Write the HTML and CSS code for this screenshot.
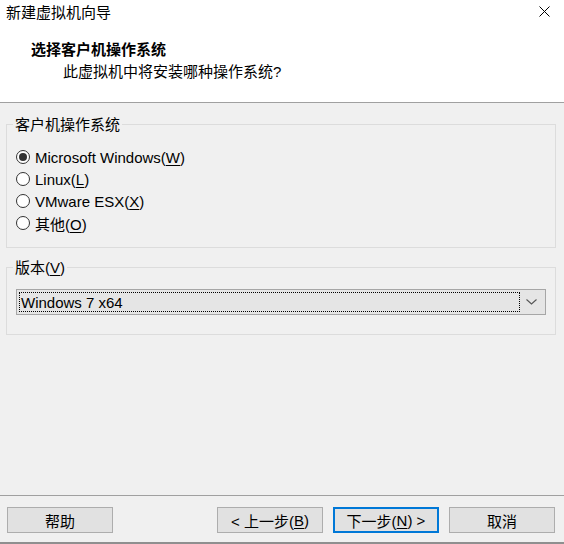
FILE: index.html
```html
<!DOCTYPE html>
<html lang="zh-CN">
<head>
<meta charset="utf-8">
<title>新建虚拟机向导</title>
<link rel="stylesheet" href="styles.css">
</head>
<body>
<div class="window">
  <header class="header">
    <div class="titlebar">
      <span class="title">新建虚拟机向导</span>
      <span class="close">
        <svg width="11" height="11" viewBox="0 0 11 11"><path d="M0.5 0.5 L10.5 10.5 M10.5 0.5 L0.5 10.5" stroke="#000" stroke-width="1" fill="none"/></svg>
      </span>
    </div>
    <div class="heading">选择客户机操作系统</div>
    <div class="subheading">此虚拟机中将安装哪种操作系统?</div>
  </header>
  <main class="main">
    <fieldset class="group group-os">
      <legend class="legend">客户机操作系统</legend>
      <div class="radios">
        <label class="radio"><span class="dot checked"></span><span>Microsoft Windows(<u>W</u>)</span></label>
        <label class="radio"><span class="dot"></span><span>Linux(<u>L</u>)</span></label>
        <label class="radio"><span class="dot"></span><span>VMware ESX(<u>X</u>)</span></label>
        <label class="radio"><span class="dot"></span><span>其他(<u>O</u>)</span></label>
      </div>
    </fieldset>
    <fieldset class="group group-ver">
      <legend class="legend">版本(<u>V</u>)</legend>
      <div class="combo">
        <div class="combo-value"><span>Windows 7 x64</span></div>
        <div class="combo-arrow">
          <svg width="11" height="6" viewBox="0 0 11 6"><path d="M0.5 0.5 L5.5 5 L10.5 0.5" stroke="#555" stroke-width="1.1" fill="none"/></svg>
        </div>
      </div>
    </fieldset>
  </main>
  <footer class="footer">
    <button class="btn">帮助</button>
    <div class="spacer"></div>
    <button class="btn">&lt; 上一步(<u>B</u>)</button>
    <button class="btn btn-default">下一步(<u>N</u>) &gt;</button>
    <button class="btn">取消</button>
  </footer>
</div>
</body>
</html>
```

FILE: styles.css
```css
* { box-sizing: border-box; }
html, body { margin: 0; padding: 0; }
body {
  width: 564px;
  height: 544px;
  background: #f0f0f0;
  font-family: "Liberation Sans", "Noto Sans CJK SC", sans-serif;
  font-size: 15px;
  color: #000;
  overflow: hidden;
}
.window {
  height: 544px;
  display: flex;
  flex-direction: column;
  border-bottom: 2px solid #8f8f8f;
}
.header {
  background: #fff;
  height: 103px;
  border-bottom: 1px solid #a0a0a0;
}
.titlebar {
  height: 25px;
  display: flex;
  align-items: center;
  justify-content: space-between;
  padding: 0 14px 0 6px;
}
.title { line-height: 25px; }
.close { display: flex; height: 11px; margin-top: -2px; }
.heading {
  margin-top: 14px;
  padding-left: 31px;
  font-weight: bold;
  line-height: 22px;
}
.subheading {
  padding-left: 63px;
  line-height: 22px;
}
.main {
  flex: 1;
  padding: 11px 8px 0 6px;
}
.group {
  margin: 0;
  border: 1px solid #dcdcdc;
  padding: 0 9px 0 6px;
  min-width: 0;
}
.legend {
  padding: 0 2px;
  line-height: 21px;
}
.group-os { padding-top: 11px; padding-bottom: 13px; }
.group-ver { margin-top: 9px; padding-top: 11px; padding-bottom: 19px; }
.radios { display: flex; flex-direction: column; margin-left: 3px; }
.radio {
  display: flex;
  align-items: center;
  height: 22px;
  gap: 5px;
}
.dot {
  width: 14px;
  height: 14px;
  border: 1px solid #333;
  border-radius: 50%;
  background: #fff;
  display: flex;
  align-items: center;
  justify-content: center;
  flex: none;
}
.dot.checked::after {
  content: "";
  width: 8px;
  height: 8px;
  border-radius: 50%;
  background: #333;
}
.combo {
  margin-left: 3px;
  height: 26px;
  border: 1px solid #a6a6a6;
  background: #e5e5e5;
  display: flex;
  padding: 2px;
}
.combo-value {
  flex: 1;
  border: 1px dotted #000;
  display: flex;
  align-items: center;
  padding-left: 1px;
}
.combo-arrow {
  width: 23px;
  display: flex;
  align-items: center;
  justify-content: center;
}
.footer {
  border-top: 1px solid #a0a0a0;
  padding: 11px 9px 9px 7px;
  display: flex;
  align-items: center;
  gap: 10px;
}
.spacer { flex: 1; }
.btn {
  width: 106px;
  height: 26px;
  border: 1px solid #adadad;
  background: #e1e1e1;
  font: inherit;
  color: #000;
  padding: 0;
  display: flex;
  align-items: center;
  justify-content: center;
  white-space: pre;
}
.btn-default { border: 2px solid #0078d7; }
u { text-underline-offset: 2px; }
```
